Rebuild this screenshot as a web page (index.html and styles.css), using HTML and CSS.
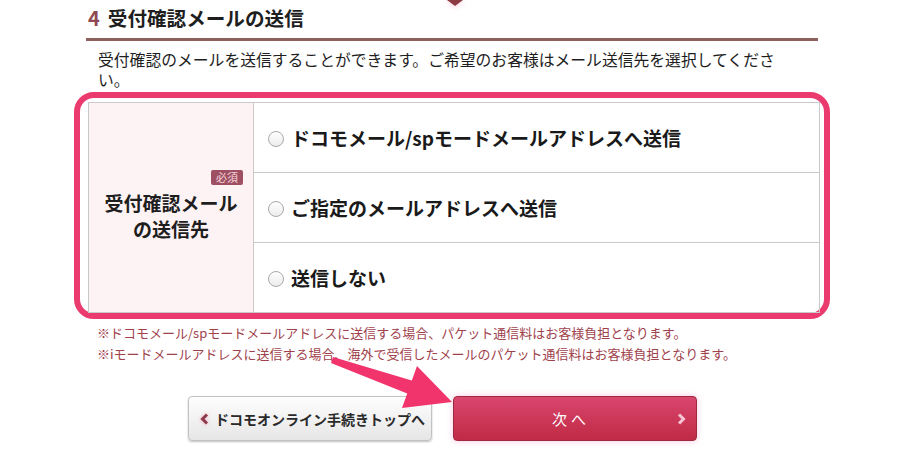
FILE: index.html
```html
<!DOCTYPE html>
<html lang="ja">
<head>
  <meta charset="UTF-8" />
  <meta name="viewport" content="width=device-width, initial-scale=1" />
  <title>受付確認メールの送信</title>
  <link rel="stylesheet" href="styles.css">
</head>
<body>
  <div class="page">
    <div class="step-arrow"></div>
    <h2 class="section-title"><span class="num">4</span>受付確認メールの送信</h2>
    <p class="lead">受付確認のメールを送信することができます。ご希望のお客様はメール送信先を選択してください。</p>

    <div class="highlight">
      <div class="form-table">
        <div class="form-head">
          <span class="required">必須</span>
          <span class="head-label">受付確認メール<br>の送信先</span>
        </div>
        <div class="form-options">
          <label class="option"><input type="radio" name="mail" /><span>ドコモメール/spモードメールアドレスへ送信</span></label>
          <label class="option"><input type="radio" name="mail" /><span>ご指定のメールアドレスへ送信</span></label>
          <label class="option"><input type="radio" name="mail" /><span>送信しない</span></label>
        </div>
      </div>
    </div>

    <div class="notes">
      <p>※ドコモメール/spモードメールアドレスに送信する場合、パケット通信料はお客様負担となります。</p>
      <p>※iモードメールアドレスに送信する場合、海外で受信したメールのパケット通信料はお客様負担となります。</p>
    </div>

    <div class="buttons">
      <button class="btn btn-back" type="button">
        <svg class="chev" width="10" height="12" viewBox="0 0 10 12"><polyline points="7,1.5 2.5,6 7,10.5" fill="none" stroke="#8e3a4a" stroke-width="3" /></svg>
        ドコモオンライン手続きトップへ
      </button>
      <button class="btn btn-next" type="button">
        <span class="next-label">次へ</span>
        <svg class="chev" width="10" height="12" viewBox="0 0 10 12"><polyline points="3,1.5 7.5,6 3,10.5" fill="none" stroke="#f6c6d4" stroke-width="3" /></svg>
      </button>
    </div>

    <svg class="pointer" width="900" height="450" viewBox="0 0 900 450">
      <polygon points="331,363 333,357 411.8,380.4 417,366 452,402 402,408 407.2,393.6" fill="#f2346d" />
    </svg>
  </div>
</body>
</html>
```

FILE: styles.css
```css
* {
  margin: 0;
  padding: 0;
  box-sizing: border-box;
}
body {
  font-family: "Noto Sans CJK JP", "Noto Sans", sans-serif;
  background: #fff;
  color: #222;
  width: 900px;
  height: 450px;
  overflow: hidden;
}
.page {
  width: 732px;
  margin-left: 86px;
}
.step-arrow {
  width: 0;
  height: 0;
  margin-left: 361px;
  border-left: 8px solid transparent;
  border-right: 8px solid transparent;
  border-top: 6px solid #8c3a42;
  filter: drop-shadow(0 0 3px rgba(240, 140, 180, 0.7));
}
.section-title {
  font-size: 19.6px;
  line-height: 24px;
  font-weight: bold;
  padding-bottom: 8px;
  border-bottom: 3px solid #8d605d;
  color: #1e1e1e;
}
.section-title .num {
  color: #8d4a50;
  font-size: 20px;
  margin: 0 8px 0 2px;
}
.lead {
  font-size: 15.8px;
  line-height: 20px;
  margin: 9px 0 0 12px;
  width: 690px;
  color: #1e1e1e;
}
.highlight {
  margin: 2px -12px 0 -12px;
  border: 6px solid #ea3a6e;
  border-radius: 20px;
  padding: 4px 4px 0 8px;
}
.form-table {
  display: flex;
  border: 1px solid #c9c9c9;
}
.form-head {
  width: 165px;
  background: #fdf3f4;
  border-right: 1px solid #c9c9c9;
  display: flex;
  flex-direction: column;
  justify-content: center;
  align-items: center;
  padding-bottom: 4px;
}
.required {
  align-self: flex-end;
  margin-right: 10px;
  background: #9e5062;
  color: #f8d4de;
  font-size: 11px;
  line-height: 15px;
  padding: 0 5px;
  border-radius: 2px;
}
.head-label {
  margin-top: 5px;
  font-size: 19px;
  font-weight: bold;
  line-height: 26px;
  text-align: center;
  color: #1e1e1e;
}
.form-options {
  flex: 1;
}
.option {
  display: flex;
  align-items: center;
  height: 70px;
  padding-left: 14px;
  border-bottom: 1px solid #c9c9c9;
  font-size: 19px;
  font-weight: bold;
  color: #1a1a1a;
}
.option:last-child {
  border-bottom: none;
  height: 69px;
}
.option input {
  appearance: none;
  width: 16px;
  height: 16px;
  border: 1px solid #a9a9a9;
  border-radius: 50%;
  background: linear-gradient(#fff, #ececec);
  margin: 2px 7px 0 0;
}
.notes {
  margin-top: 3px;
  padding-left: 11px;
  font-size: 13px;
  line-height: 21px;
  color: #a0424c;
}
.buttons {
  display: flex;
  gap: 21px;
  margin-top: 32px;
  padding-left: 102px;
}
.btn {
  width: 244px;
  height: 45px;
  border-radius: 4px;
  font-family: inherit;
  display: flex;
  align-items: center;
  cursor: pointer;
}
.btn-back {
  background: linear-gradient(#fefefe, #e6e6e6);
  border: 1px solid #c2c2c2;
  box-shadow: 0 1px 2px rgba(0, 0, 0, 0.25);
  color: #2a2a2a;
  font-size: 14px;
  font-weight: bold;
  padding-left: 11px;
  gap: 5px;
}
.btn-back .chev {
  filter: drop-shadow(0 0 2px rgba(240, 120, 160, 0.6));
}
.btn-next {
  background: linear-gradient(#d9466f, #c02a44);
  border: 1px solid #9e2a40;
  box-shadow: 0 0 6px rgba(245, 150, 200, 0.55);
  color: #fff;
  font-size: 15px;
  padding-right: 10px;
}
.next-label {
  flex: 1;
  text-align: center;
  letter-spacing: 4px;
  padding-left: 12px;
}
.pointer {
  position: absolute;
  left: 0;
  top: 0;
  pointer-events: none;
}
```
